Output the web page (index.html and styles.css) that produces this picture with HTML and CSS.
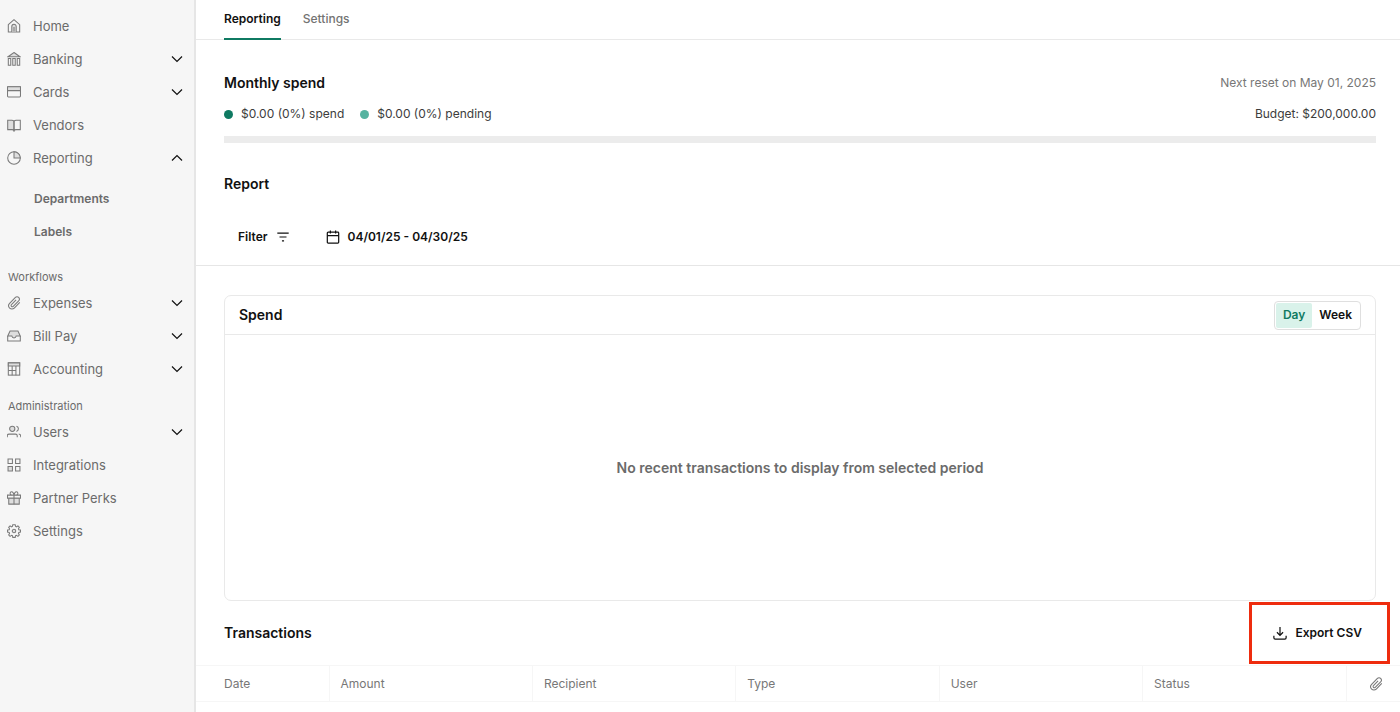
FILE: index.html
```html
<!DOCTYPE html>
<html lang="en">
<head>
    <meta charset="UTF-8">
    <meta name="viewport" content="width=device-width, initial-scale=1.0">
    <title>Reporting</title>
    <link rel="stylesheet" href="styles.css">
</head>
<body>

<svg class="sprite" aria-hidden="true">
    <symbol id="chevron" viewBox="0 0 12 12"><path d="M1 3.5l5 5 5-5"/></symbol>
    <symbol id="clip" viewBox="0 0 16 16"><path d="M14.6 7.2l-6.300 6.600a3.700 3.700 0 0 1-5.300 0 3.800 3.800 0 0 1 0-5.300l6.600-6.800a2.600 2.600 0 0 1 3.700 0 2.700 2.700 0 0 1 0 3.800l-6.200 6.400a1.400 1.400 0 0 1-2 0 1.400 1.400 0 0 1 0-2l5.300-5.500"/></symbol>
</svg>

<div class="layout">
    <nav class="sidebar">
        <a href="#" class="nav-item">
            <svg class="icon" viewBox="0 0 16 16"><path d="M1.500 6.500L8 .8l6.500 5.700v8.300h-13z"/><path class="shade" d="M5.500 14.800V8.500a2.500 2.500 0 0 1 5 0v6.300"/><path d="M8 9v5.500"/></svg>
            <span>Home</span>
        </a>
        <a href="#" class="nav-item">
            <svg class="icon" viewBox="0 0 16 16"><path class="shade" d="M8 .6l6.800 4.800H1.200z"/><path d="M1.500 7.500h2.800v7.700H1.500zM6.600 7.500h2.800v7.700H6.600zM11.700 7.500h2.800v7.700h-2.800z"/></svg>
            <span>Banking</span>
            <svg class="chevron"><use href="#chevron"/></svg>
        </a>
        <a href="#" class="nav-item">
            <svg class="icon" viewBox="0 0 16 16"><rect x=".6" y="2" width="14.8" height="11.6" rx="1"/><path class="shade" d="M.6 2h14.8v4.400H.6z"/></svg>
            <span>Cards</span>
            <svg class="chevron"><use href="#chevron"/></svg>
        </a>
        <a href="#" class="nav-item">
            <svg class="icon" viewBox="0 0 16 16"><path class="shade" d="M8 3.600Q7 2.500 5.500 2.500H.8v10.800h5q1.500 0 2.200 1z"/><path d="M8 3.600q1-1.100 2.500-1.100h4.700v10.800h-5q-1.500 0-2.200 1z"/></svg>
            <span>Vendors</span>
        </a>
        <a href="#" class="nav-item">
            <svg class="icon" viewBox="0 0 16 16"><circle cx="8" cy="8" r="7.200"/><path class="shade" d="M8 .8V8h7.200A7.200 7.200 0 0 0 8 .8z"/></svg>
            <span>Reporting</span>
            <svg class="chevron open"><use href="#chevron"/></svg>
        </a>
        <div class="sub-nav">
            <a href="#">Departments</a>
            <a href="#">Labels</a>
        </div>

        <h2 class="nav-title">Workflows</h2>
        <a href="#" class="nav-item">
            <svg class="icon"><use href="#clip"/></svg>
            <span>Expenses</span>
            <svg class="chevron"><use href="#chevron"/></svg>
        </a>
        <a href="#" class="nav-item">
            <svg class="icon" viewBox="0 0 16 16"><path class="shade" d="M.8 8l2.700-5.800h9L15.200 8h-4.700q-.4 2.200-2.500 2.200T5.500 8z"/><path d="M.8 8v5.800h14.400V8"/></svg>
            <span>Bill Pay</span>
            <svg class="chevron"><use href="#chevron"/></svg>
        </a>
        <a href="#" class="nav-item">
            <svg class="icon" viewBox="0 0 16 16"><rect x="1.500" y="1" width="13" height="14"/><path class="shade" d="M1.500 1h13v3.600h-13z"/><path d="M1.500 9.800h8.700M5.900 4.600V15M10.200 4.600V15"/></svg>
            <span>Accounting</span>
            <svg class="chevron"><use href="#chevron"/></svg>
        </a>

        <h2 class="nav-title">Administration</h2>
        <a href="#" class="nav-item">
            <svg class="icon" viewBox="0 0 16 16"><circle class="shade" cx="6" cy="4.400" r="3"/><path d="M.3 14v-1.600q0-2 2-2h7.400q2 0 2 2V14M10.800 1.500a3 3 0 0 1 0 5.800M13.400 10.400q2.300.2 2.300 2.200V14"/></svg>
            <span>Users</span>
            <svg class="chevron"><use href="#chevron"/></svg>
        </a>
        <a href="#" class="nav-item">
            <svg class="icon" viewBox="0 0 16 16"><path d="M1.200 1.200h5v5h-5zM9.800 1.200h5v5h-5zM9.800 9.800h5v5h-5z"/><path class="shade" d="M1.200 9.800h5v5h-5z"/></svg>
            <span>Integrations</span>
        </a>
        <a href="#" class="nav-item">
            <svg class="icon" viewBox="0 0 16 16"><path d="M.6 4.700h14.800v3.500H.6z"/><path class="shade" d="M2 8.200h12V15H2z"/><path d="M8 4.700V15M8 4.700C7.500 2 6.500.8 5.300.8 3 .8 3 4.200 5 4.700M8 4.700C8.500 2 9.500.8 10.700.8 13 .8 13 4.200 11 4.700"/></svg>
            <span>Partner Perks</span>
        </a>
        <a href="#" class="nav-item">
            <svg class="icon" viewBox="0 0 16 16"><path d="M6.600.8h2.800l.4 2 1 .4 1.700-1.100 1.600 1.700-1 1.600.4 1.200 1.900.2v2.500l-1.900.4-.4 1.100 1 1.700-1.600 1.600-1.700-1.100-1 .4-.4 1.900H6.600l-.4-1.900-1-.4-1.700 1.100-1.600-1.600 1-1.700-.4-1.100-1.900-.4V6.800l1.900-.2.400-1.200-1-1.600 1.600-1.700 1.700 1.100 1-.4z"/><circle class="shade" cx="8" cy="8" r="2"/></svg>
            <span>Settings</span>
        </a>
    </nav>

    <main class="content">
        <div class="tabs">
            <a href="#" class="tab active">Reporting</a>
            <a href="#" class="tab">Settings</a>
        </div>

        <section class="budget">
            <div class="row">
                <h1 class="title">Monthly spend</h1>
                <span class="muted">Next reset on May 01, 2025</span>
            </div>
            <div class="row legend-row">
                <div class="legend">
                    <span class="legend-item"><i class="dot spend"></i>$0.00 (0%) spend</span>
                    <span class="legend-item"><i class="dot pending"></i>$0.00 (0%) pending</span>
                </div>
                <span>Budget: $200,000.00</span>
            </div>
            <div class="budget-bar"></div>
        </section>

        <section class="report">
            <h1 class="title">Report</h1>
            <div class="filters">
                <button type="button" class="plain-button">
                    Filter
                    <svg class="icon" viewBox="0 0 16 16"><path d="M1.500 3.500h13M4 8h8M6.800 12.500h2.400"/></svg>
                </button>
                <button type="button" class="plain-button">
                    <svg class="icon" viewBox="0 0 16 16"><rect x="1.500" y="2.500" width="13" height="12.500" rx="1"/><path d="M1.500 6.500h13M5 .5v3.500M11 .5v3.500"/></svg>
                    04/01/25 - 04/30/25
                </button>
            </div>
        </section>

        <section class="card">
            <div class="card-header">
                <h1 class="title">Spend</h1>
                <div class="toggle">
                    <button type="button" class="selected">Day</button>
                    <button type="button">Week</button>
                </div>
            </div>
            <div class="card-body">No recent transactions to display from selected period</div>
        </section>

        <section class="transactions">
            <div class="row transactions-header">
                <h1 class="title">Transactions</h1>
                <div class="export">
                    <button type="button" class="plain-button">
                        <svg class="icon" viewBox="0 0 16 16"><path d="M8 1v9.500M4.500 7.200L8 10.700l3.500-3.500M1 11v2.500q0 1.500 1.500 1.500h11q1.500 0 1.500-1.500V11"/></svg>
                        Export CSV
                    </button>
                </div>
            </div>
            <table>
                <thead>
                    <tr>
                        <th class="col-date">Date</th>
                        <th>Amount</th>
                        <th>Recipient</th>
                        <th>Type</th>
                        <th>User</th>
                        <th>Status</th>
                        <th class="col-clip" aria-label="Attachments"><svg class="icon"><use href="#clip"/></svg></th>
                    </tr>
                </thead>
            </table>
        </section>
    </main>
</div>

</body>
</html>
```
FILE: styles.css
```css
* {
    box-sizing: border-box;
}
body {
    margin: 0;
    font-family: 'Inter', sans-serif;
    font-size: 13px;
    line-height: 18px;
    color: #3c3c3c;
    background-color: #fff;
}
a {
    text-decoration: none;
    color: inherit;
}
button {
    font: inherit;
    color: inherit;
    background: none;
    border: none;
    cursor: pointer;
}
h1, h2 {
    margin: 0;
}
.sprite {
    display: none;
}
.layout {
    display: flex;
    min-height: 100vh;
}

/* icons */
.icon, .chevron {
    display: block;
    flex: none;
    width: 14px;
    height: 14px;
    fill: none;
    stroke: currentColor;
    stroke-width: 1.2;
}
.icon .shade {
    fill: #dedede;
}
.chevron {
    width: 12px;
    height: 12px;
    margin-left: auto;
    color: #111;
}
.chevron.open {
    transform: rotate(180deg);
}

/* sidebar */
.sidebar {
    flex: none;
    width: 196px;
    padding: 9px 11px 0 7px;
    background-color: #f6f6f6;
    border-right: 2px solid #e6e6e6;
    color: #6b6b6b;
}
.sidebar .icon {
    color: #7a7a7a;
}
.nav-item {
    display: flex;
    align-items: center;
    gap: 12px;
    height: 33px;
}
.sub-nav {
    padding: 8px 0 8px 27px;
    font-size: 12px;
    font-weight: 600;
}
.sub-nav a {
    display: flex;
    align-items: center;
    height: 33px;
}
.nav-title {
    margin-top: 12px;
    padding-left: 1px;
    font-size: 11px;
    font-weight: 400;
}

/* main */
.content {
    flex: 1;
    min-width: 0;
}
.tabs {
    display: flex;
    gap: 22px;
    height: 40px;
    padding-left: 28px;
    border-bottom: 1px solid #e9e9e9;
    font-size: 12px;
    font-weight: 500;
    color: #737373;
}
.tab {
    height: 40px;
    padding-top: 10px;
}
.tab.active {
    color: #111;
    font-weight: 600;
    border-bottom: 2px solid #0f7a62;
}
.row {
    display: flex;
    justify-content: space-between;
    align-items: center;
}
.title {
    font-size: 14px;
    font-weight: 600;
    color: #111;
}
.muted {
    color: #777;
}
.budget {
    padding: 34px 24px 0 28px;
    font-size: 12px;
}
.legend-row {
    margin: 13px 0;
}
.legend {
    display: flex;
    gap: 16px;
}
.legend-item {
    display: flex;
    align-items: center;
    gap: 8px;
}
.dot {
    width: 9px;
    height: 9px;
    border-radius: 50%;
}
.dot.spend {
    background-color: #0f7a62;
}
.dot.pending {
    background-color: #56b3a0;
}
.budget-bar {
    height: 7px;
    background-color: #ececec;
}
.report {
    padding: 32px 24px 10px 28px;
    border-bottom: 1px solid #e6e6e6;
}
.filters {
    display: flex;
    gap: 8px;
    margin-top: 26px;
}
.plain-button {
    display: flex;
    align-items: center;
    gap: 8px;
    height: 36px;
    padding: 0 14px;
    font-size: 12px;
    font-weight: 600;
    color: #111;
}
.plain-button .icon {
    stroke-width: 1.4;
}

.card {
    margin: 29px 24px 0 28px;
    border: 1px solid #e9e9e9;
    border-radius: 7px;
}
.card-header {
    display: flex;
    justify-content: space-between;
    align-items: center;
    height: 39px;
    padding: 0 14px;
    border-bottom: 1px solid #e9e9e9;
}
.toggle {
    display: flex;
    padding: 1px;
    border: 1px solid #dfdfdf;
    border-radius: 4px;
}
.toggle button {
    height: 25px;
    padding: 0 7px;
    border-radius: 2px;
    font-size: 12px;
    font-weight: 600;
    color: #111;
}
.toggle .selected {
    background-color: #d9f2ea;
    color: #0f7a62;
}
.card-body {
    display: flex;
    align-items: center;
    justify-content: center;
    height: 265px;
    font-size: 14px;
    font-weight: 600;
    color: #6b6b6b;
}

.transactions-header {
    height: 64px;
    padding: 0 24px 0 28px;
}
.export {
    position: relative;
}
/* red frame around the export button */
.export::after {
    content: "";
    position: absolute;
    inset: -13px -14px -13px -10px;
    border: 3px solid #ee2c0e;
    pointer-events: none;
}
table {
    width: 100%;
    table-layout: fixed;
    border-collapse: collapse;
    border-top: 1px solid #f6f6f6;
    border-bottom: 1px solid #f6f6f6;
}
th {
    height: 36px;
    padding: 0 11px;
    border-right: 1px solid #f6f6f6;
    text-align: left;
    font-size: 12px;
    font-weight: 400;
    color: #777;
}
th:last-child {
    border-right: none;
}
.col-date {
    width: 133px;
    padding-left: 28px;
}
.col-clip {
    width: 54px;
    padding: 0 0 0 22px;
}
```
